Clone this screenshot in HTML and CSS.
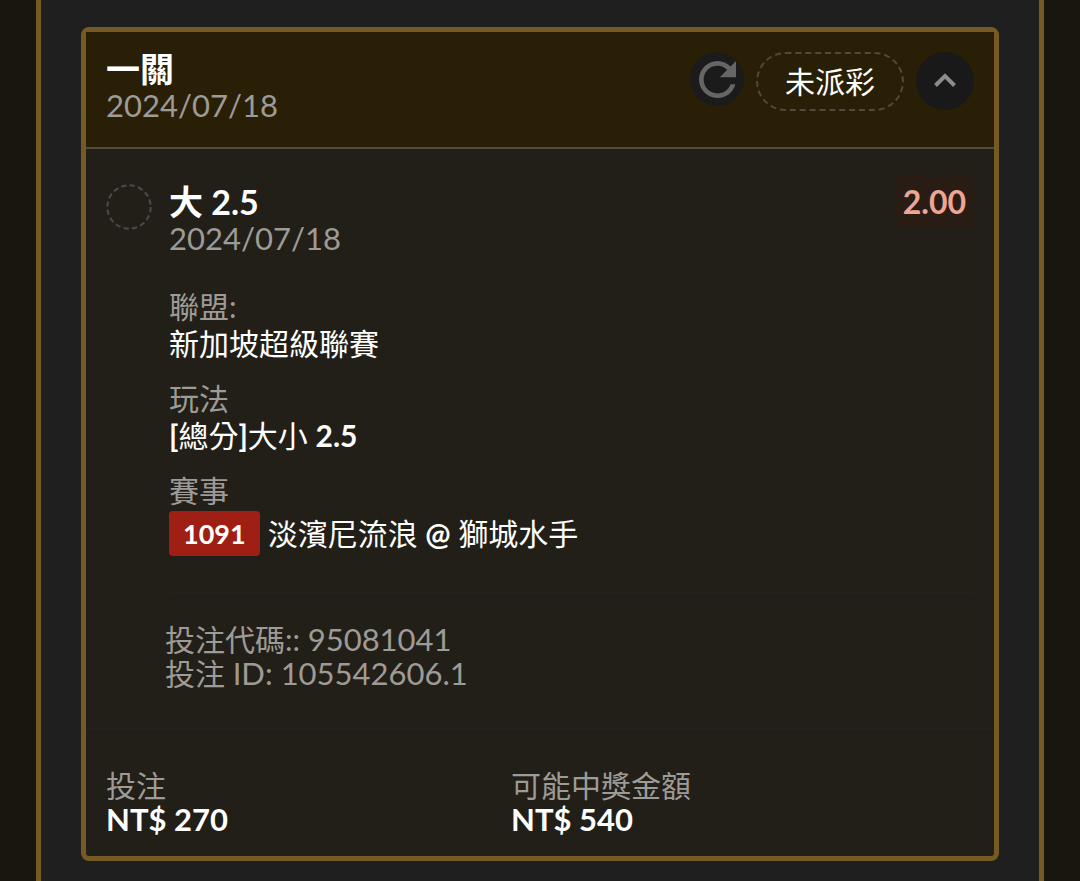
FILE: index.html
```
<!DOCTYPE html>
<html lang="zh-Hant">
<head>
  <meta charset="utf-8">
  <meta name="viewport" content="width=device-width, initial-scale=1">
  <title>投注紀錄</title>
  <link rel="stylesheet" href="styles.css">
</head>
<body>
  <main class="panel">
    <article class="card">
      <!-- Header -->
      <header class="card-head">
        <div class="card-title">
          <h1>一關</h1>
          <time datetime="2024-07-18">2024/07/18</time>
        </div>
        <div class="actions">
          <button type="button" class="round refresh" aria-label="重新整理">
            <svg width="37" height="37" viewBox="4 4 16 16"><path fill="#666" d="M17.65 6.35C16.2 4.9 14.21 4 12 4c-4.42 0-7.99 3.58-7.99 8s3.57 8 7.99 8c3.73 0 6.84-2.55 7.73-6h-2.08c-.82 2.33-3.04 4-5.65 4-3.31 0-6-2.69-6-6s2.69-6 6-6c1.66 0 3.14.69 4.22 1.78L13 11h7V4l-2.35 2.35z"/></svg>
          </button>
          <span class="status">未派彩</span>
          <button type="button" class="round toggle" aria-label="收合">
            <svg width="24" height="16" viewBox="0 0 24 16"><path d="M2.5 12.5 12 3 21.5 12.5" fill="none" stroke="#8c8c8c" stroke-width="4"/></svg>
          </button>
        </div>
      </header>

      <!-- Selection -->
      <section class="bet">
        <svg class="mark" width="46" height="46" viewBox="0 0 46 46"><circle cx="23" cy="23" r="21.7" fill="none" stroke="#4d4a46" stroke-width="2" stroke-dasharray="5.3 3.22"/></svg>
        <div class="bet-main">
          <div class="bet-top">
            <div class="card-title">
              <h2>大 2.5</h2>
              <time datetime="2024-07-18">2024/07/18</time>
            </div>
            <span class="odds">2.00</span>
          </div>
          <dl class="details">
            <div>
              <dt>聯盟:</dt>
              <dd>新加坡超級聯賽</dd>
            </div>
            <div>
              <dt>玩法</dt>
              <dd><b>[</b>總分<b>]</b>大小 <b>2.5</b></dd>
            </div>
            <div>
              <dt>賽事</dt>
              <dd class="match"><span class="chip">1091</span><span>淡濱尼流浪 <b class="at">@</b> 獅城水手</span></dd>
            </div>
          </dl>
          <div class="codes">
            <p>投注代碼:: <span class="num">95081041</span></p>
            <p>投注 <span class="num">ID: 105542606.1</span></p>
          </div>
        </div>
      </section>

      <!-- Totals -->
      <footer>
        <dl class="totals">
          <div>
            <dt>投注</dt>
            <dd>NT$ 270</dd>
          </div>
          <div>
            <dt>可能中獎金額</dt>
            <dd>NT$ 540</dd>
          </div>
        </dl>
      </footer>
    </article>
  </main>
</body>
</html>
```
FILE: styles.css
```
:root{
  --gold:#755a23;
  --muted:#9e9b97;
}
*{box-sizing:border-box;}
body{
  margin:0;
  padding:0 36px;
  background:#19160f;
  color:#fff;
  font-family:Lato,"Noto Sans CJK TC",sans-serif;
  font-size:30px;
  line-height:37px;
}
h1,h2,p,dl,dd{margin:0;}
.panel{
  min-height:100vh;
  padding:27px 40px 20px;
  background:#1f1f1f;
  border:solid var(--gold);
  border-width:0 5px;
}
.card{
  background:#221f19;
  border:5px solid var(--gold);
  border-radius:8px;
}
.card-head{
  display:flex;
  justify-content:space-between;
  align-items:flex-start;
  padding:18px 20px 23px;
  background:#291f06;
  border-bottom:2px solid #514a40;
}
.card-title h1,.card-title h2{font-size:34px;line-height:37px;}
.card-title time{display:block;font-size:31px;color:var(--muted);}
.actions{display:flex;align-items:flex-start;gap:12px;padding-top:2px;}
.round{
  display:flex;
  align-items:center;
  justify-content:center;
  flex:none;
  padding:0;
  border:none;
  border-radius:50%;
  background:#191919;
  cursor:pointer;
}
.refresh{width:54px;height:54px;background:#1b1b1b;}
.toggle{width:58px;height:58px;}
.status{
  padding:9px 27px;
  border:2px dashed #514a3d;
  border-radius:30px;
}
.bet{
  display:flex;
  gap:17px;
  padding:34px 20px 38px 20px;
}
.mark{flex:none;margin-top:1px;}
.bet-main{flex:1;}
.bet-top{display:flex;justify-content:space-between;align-items:flex-start;}
.odds{
  margin-top:-8px;
  padding:8px;
  background:#291c14;
  color:#efa594;
  font-size:32px;
  font-weight:700;
}
.details{
  display:grid;
  gap:18px;
  margin-top:31px;
  padding-bottom:36px;
  border-bottom:2px solid #24211d;
}
dt{color:var(--muted);}
.match{display:flex;align-items:center;gap:8px;margin-top:2px;}
.chip{
  padding:4px 14px;
  background:#9f1f15;
  border-radius:4px;
  font-size:27px;
  font-weight:700;
}
.codes{
  margin:28px 0 0 -4px;
  color:var(--muted);
  line-height:34px;
}
.num{font-size:31px;}
.totals{
  display:grid;
  grid-template-columns:405px 1fr;
  padding:38px 20px 20px;
  border-top:2px solid #24211d;
  line-height:34px;
}
.totals dd{font-size:31px;font-weight:700;}
```
